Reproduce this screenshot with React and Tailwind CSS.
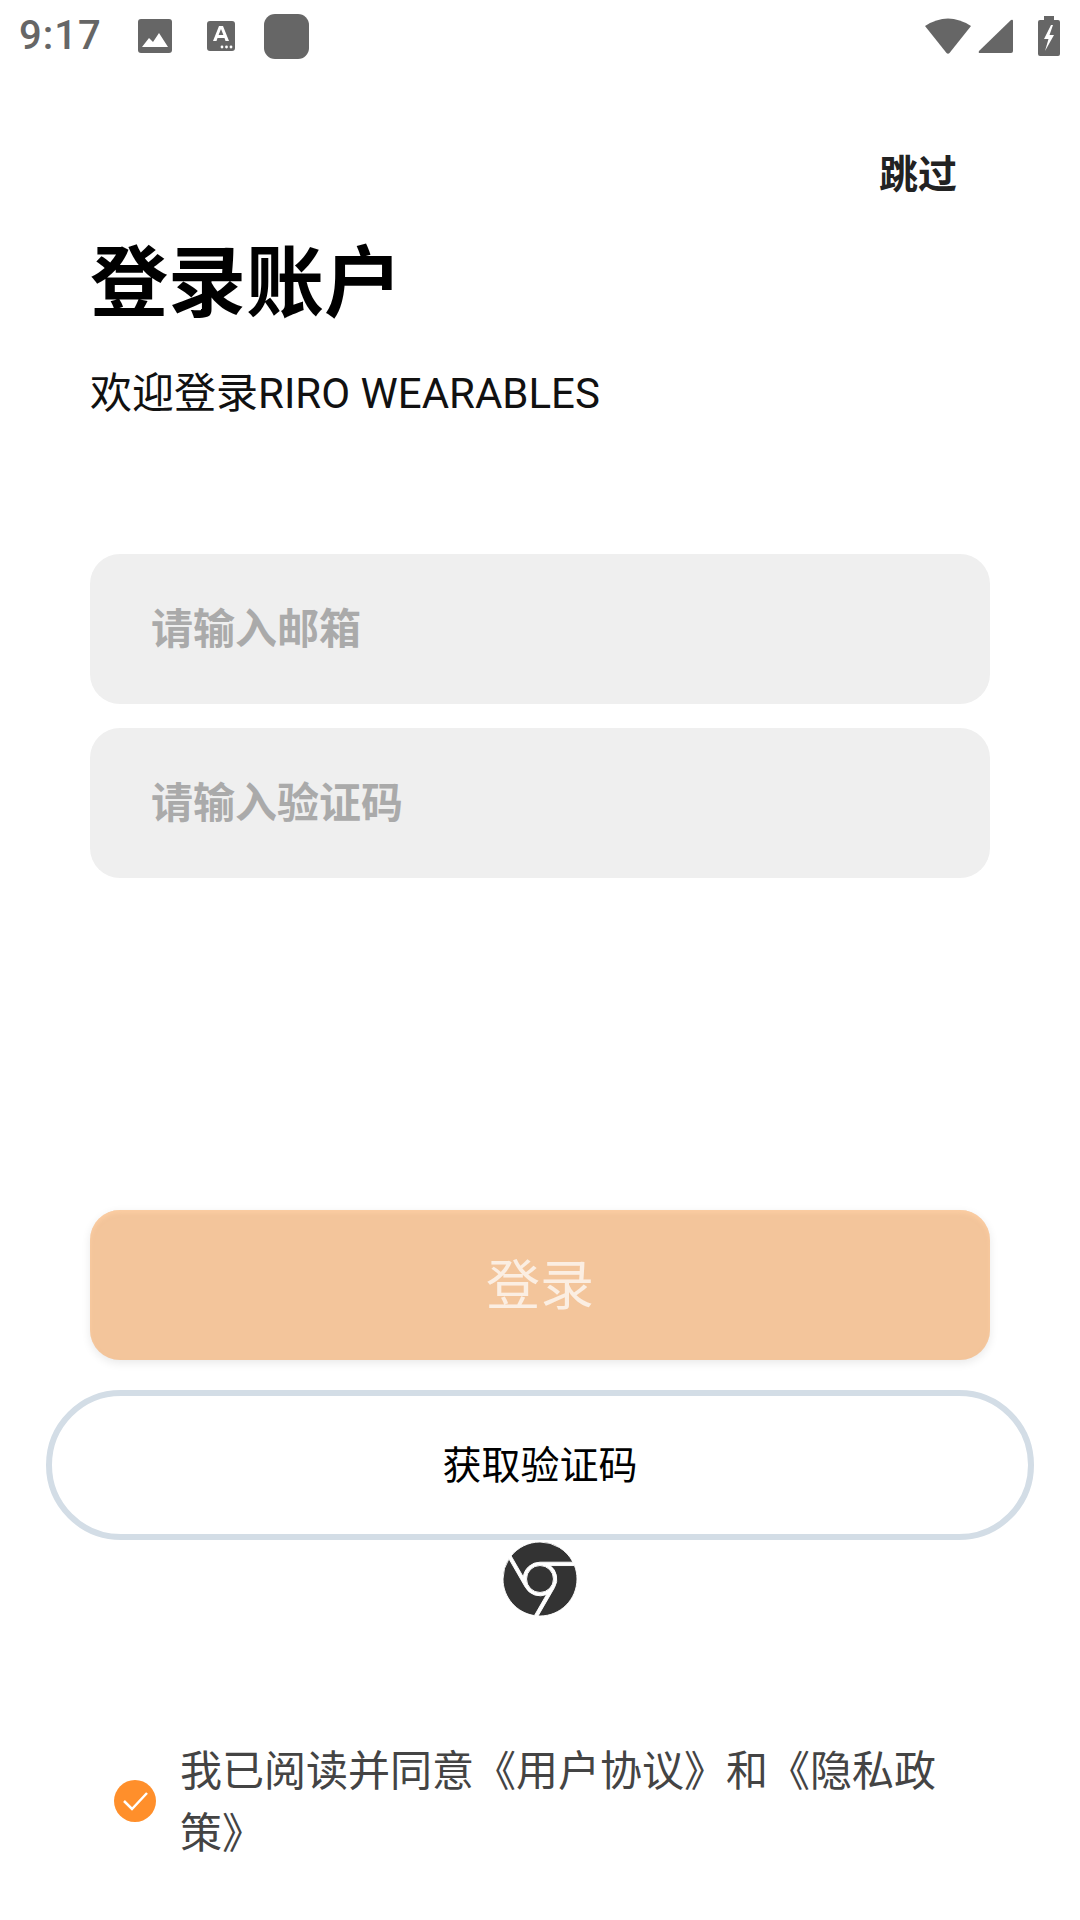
import React from "react";
import { SiGooglechrome } from "react-icons/si";

const font = { fontFamily: '"Roboto", "Noto Sans CJK SC", sans-serif' };

function StatusBar() {
  return (
    <div className="flex h-[72px] items-center justify-between text-[#666666]">
      <div className="flex items-center">
        <span className="ml-[19px] text-[40px] leading-none font-medium tracking-[1px] [font-family:Roboto,sans-serif]">9:17</span>
        <svg className="ml-[35px]" width="36" height="36" viewBox="0 0 36 36">
          <rect x="1" y="1" width="34" height="34" rx="3" fill="#666666" />
          <path d="M5 29 L12 20 L16 24 L22 15 L31 29 Z" fill="#ffffff" />
        </svg>
        <svg className="ml-[33px]" width="30" height="32" viewBox="0 0 30 32">
          <rect x="1" y="1" width="28" height="30" rx="3" fill="#666666" />
          <path d="M7 21 L13 6 H17 L23 21 H19.5 L18.5 18 H11.5 L10.5 21 Z M12.6 15 H17.4 L15 9 Z" fill="#ffffff" fillRule="evenodd" />
          <circle cx="16" cy="27" r="1.4" fill="#ffffff" />
          <circle cx="20.5" cy="27" r="1.4" fill="#ffffff" />
          <circle cx="25" cy="27" r="1.4" fill="#ffffff" />
        </svg>
        <div className="ml-[28px] h-[45px] w-[45px] rounded-[11px] bg-[#666666]" />
      </div>
      <div className="mr-[20px] flex items-center">
        <svg width="46" height="38" viewBox="0 0 46 38">
          <path d="M0 9 Q23 -6 46 9 L24.5 36 Q23 37.5 21.5 36 Z" fill="#666666" />
        </svg>
        <svg className="ml-[7px]" width="36" height="36" viewBox="0 0 36 36">
          <path d="M1 33 L33 2 Q35 1 35 3 V33 Q35 35 33 35 H2 Q0 35 1 33 Z" fill="#666666" />
        </svg>
        <svg className="ml-[24px]" width="22" height="40" viewBox="0 0 22 40">
          <path d="M6 0 H16 V4 H20 Q22 4 22 6 V38 Q22 40 20 40 H2 Q0 40 0 38 V6 Q0 4 2 4 H6 Z" fill="#666666" />
          <path d="M13 9 L6 23 H10.5 L7 35 L16 19 H11.5 L15 9 Z" fill="#ffffff" />
        </svg>
      </div>
    </div>
  );
}

export default function App() {
  return (
    <div className="h-[1920px] w-[1080px] overflow-hidden bg-white" style={font}>
      <StatusBar />

      <div className="mt-[80px] flex justify-end pr-[123px]">
        <span className="text-[39px] leading-[46px] font-bold text-[#222222]">跳过</span>
      </div>

      <div className="mt-[37px] pl-[90px]">
        <h1 className="text-[78px] leading-[100px] font-bold text-black">登录账户</h1>
        <p className="mt-[31px] text-[42px] leading-[56px] text-[#111111]">欢迎登录RIRO WEARABLES</p>
      </div>

      <div className="mt-[132px] flex flex-col gap-[24px] px-[90px]">
        <div className="flex h-[150px] items-center rounded-[30px] bg-[#efefef] pl-[61px] text-[42px] font-semibold text-[#aaaaaa]">
          请输入邮箱
        </div>
        <div className="flex h-[150px] items-center rounded-[30px] bg-[#efefef] pl-[61px] text-[42px] font-semibold text-[#aaaaaa]">
          请输入验证码
        </div>
      </div>

      <div className="mx-[90px] mt-[332px] flex h-[150px] items-center justify-center rounded-[30px] bg-[#f3c59b] pt-[3px] text-[54px] text-[#fbeee2] shadow-[0_3px_10px_rgba(0,0,0,0.09),inset_0_3px_4px_rgba(255,208,165,0.7)]">
        登录
      </div>

      <div className="mx-[46px] mt-[30px] flex h-[150px] items-center justify-center rounded-[75px] border-[6px] border-[#d3dde6] pt-[2px] text-[39px] text-black">
        获取验证码
      </div>

      <div className="mt-[3px] flex justify-center text-[#333333]">
        <SiGooglechrome size={74} stroke="#ffffff" strokeWidth={0.3} className="-my-[1px]" />
      </div>

      <div className="mt-[121px] flex items-center pr-[130px] pl-[114px]">
        <span className="flex h-[42px] w-[42px] shrink-0 items-center justify-center rounded-full bg-[#ff8f2b]">
          <svg width="28" height="22" viewBox="0 0 28 22">
            <path d="M3 11 L11 19 L26 3" fill="none" stroke="#ffffff" strokeWidth="2.5" />
          </svg>
        </span>
        <p className="ml-[24px] pt-[5px] text-[42px] leading-[62px] text-[#444444]">我已阅读并同意《用户协议》和《隐私政策》</p>
      </div>
    </div>
  );
}
